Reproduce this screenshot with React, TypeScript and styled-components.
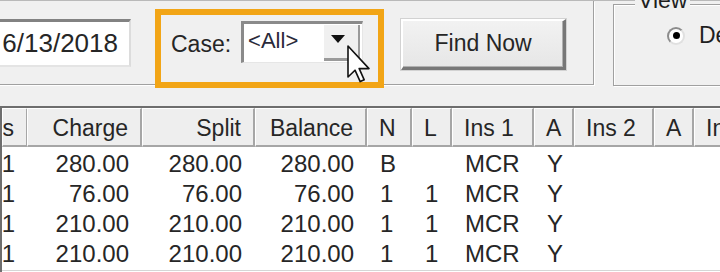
import React from 'react';
import styled, { createGlobalStyle } from 'styled-components';

const Global = createGlobalStyle`
    html, body {
        margin: 0;
        padding: 0;
        background: #f0f0f0;
    }
    body {
        font-family: 'Liberation Sans', Arial, sans-serif;
        color: #1f1f1f;
    }
`;

const Screen = styled.div`
    width: 720px;
    height: 272px;
    overflow: hidden;
    background: #f0f0f0;
    display: flex;
    flex-direction: column;
`;

const TopBar = styled.div`
    position: relative;
    height: 105px;
    display: flex;
    align-items: flex-start;
    border-top: 1px solid #b9b9b9;
    flex-shrink: 0;
`;

const SearchPanel = styled.div`
    width: 603px;
    margin-left: -10px;
    height: 83px;
    display: flex;
    align-items: center;
    border-right: 1px solid #a0a0a0;
    border-bottom: 1px solid #a0a0a0;
    box-shadow: 1px 1px 0 #ffffff;
    flex-shrink: 0;
`;

const DateBox = styled.div`
    width: 128px;
    height: 43px;
    margin-top: 1px;
    background: #ffffff;
    border-top: 3px solid #828282;
    border-right: 2px solid #dcdcdc;
    border-bottom: 2px solid #e4e4e4;
    display: flex;
    align-items: center;
    justify-content: flex-end;
    padding-right: 11px;
    font-size: 26px;
    color: #262626;
`;

const Label = styled.span`
    margin-left: 40px;
    margin-top: 4px;
    font-size: 23px;
    color: #262626;
`;

const Combo = styled.div`
    margin-left: 10px;
    margin-top: -2px;
    width: 122px;
    height: 42px;
    box-sizing: border-box;
    background: #ffffff;
    border-top: 3px solid #8a8a8a;
    border-left: 3px solid #8a8a8a;
    border-right: 1px solid #e6e6e6;
    border-bottom: 1px solid #e6e6e6;
    display: flex;
    align-items: center;
    justify-content: space-between;
`;

const ComboText = styled.span`
    font-size: 22px;
    padding-left: 4px;
    margin-top: -4px;
    color: #2a2a3a;
`;

const DropButton = styled.div`
    width: 36px;
    height: 36px;
    margin-right: 2px;
    background: #f0f0f0;
    border-right: 2px solid #9a9a9a;
    border-bottom: 3px solid #9a9a9a;
    box-sizing: border-box;
    display: flex;
    align-items: center;
    justify-content: center;
    padding-right: 6px;
`;

const Triangle = styled.div`
    width: 0;
    height: 0;
    border-left: 7px solid transparent;
    border-right: 7px solid transparent;
    border-top: 8px solid #111111;
    margin-top: -4px;
`;

const FindButton = styled.button`
    margin-left: 38px;
    margin-top: 3px;
    width: 165px;
    height: 51px;
    font-family: 'Liberation Sans', Arial, sans-serif;
    font-size: 23px;
    color: #262626;
    background: linear-gradient(#f2f2f2, #e6e6e6);
    border-top: 2px solid #ffffff;
    border-left: 2px solid #ffffff;
    border-right: 3px solid #777777;
    border-bottom: 3px solid #777777;
    box-shadow: inset -1px -1px 0 #b0b0b0, 0 0 0 1px #d2d2d2;
    padding: 0;
`;

const ViewGroup = styled.div`
    margin-left: 19px;
    margin-top: 3px;
    height: 80px;
    flex: 1;
    border-left: 1px solid #a0a0a0;
    border-top: 1px solid #a0a0a0;
    border-bottom: 1px solid #a0a0a0;
    box-shadow: inset 1px 1px 0 #ffffff, 1px 1px 0 #ffffff;
    display: flex;
    flex-direction: column;
`;

const Legend = styled.span`
    align-self: flex-start;
    margin: -16px 0 0 21px;
    padding: 0 3px;
    line-height: 23px;
    font-size: 23px;
    background: #f0f0f0;
`;

const RadioRow = styled.div`
    display: flex;
    align-items: center;
    margin: 10px 0 0 53px;
    gap: 14px;
    font-size: 23px;
`;

const Radio = styled.div`
    width: 14px;
    height: 14px;
    border-radius: 50%;
    background: #ffffff;
    border: 2px solid #8c8c8c;
    border-right-color: #e0e0e0;
    border-bottom-color: #e0e0e0;
    display: flex;
    align-items: center;
    justify-content: center;

    &::after {
        content: '';
        width: 7px;
        height: 7px;
        border-radius: 50%;
        background: #000000;
    }
`;

const Highlight = styled.div`
    position: absolute;
    left: 155px;
    top: 8px;
    width: 217px;
    height: 67px;
    border: 6px solid #f2a516;
`;

const Cursor = styled.svg`
    position: absolute;
    left: 345px;
    top: 44px;
    width: 28px;
    height: 38px;
`;

const Grid = styled.div`
    flex: 1;
    border-top: 2px solid #6e6e6e;
    border-left: 2px solid #6e6e6e;
    background: #ffffff;
    overflow: hidden;
    display: flex;
    flex-direction: column;
`;

const COLS = '25px 115px 113px 112px 45px 40px 82px 40px 80px 40px 80px';

const HeaderRow = styled.div`
    display: grid;
    grid-template-columns: ${COLS};
    height: 39px;
    background: #f0f0f0;
`;

const HeadCell = styled.div<{ $right?: boolean }>`
    display: flex;
    align-items: center;
    justify-content: ${p => (p.$right ? 'flex-end' : 'flex-start')};
    padding: 2px 12px 0 11px;
    font-size: 23px;
    color: #262626;
    white-space: nowrap;
    overflow: hidden;
    border-top: 1px solid #ffffff;
    border-left: 1px solid #ffffff;
    border-right: 2px solid #a6a6a6;
    border-bottom: 2px solid #a6a6a6;
    background: #eeeeee;
`;

const Body = styled.div`
    height: 123px;
    border-bottom: 1px solid #d6d6d6;
`;

const Row = styled.div`
    display: grid;
    grid-template-columns: ${COLS};
    height: 30px;
`;

const Cell = styled.div<{ $right?: boolean }>`
    display: flex;
    align-items: center;
    justify-content: ${p => (p.$right ? 'flex-end' : 'flex-start')};
    padding: 3px 13px 0 13px;
    font-size: 24px;
    white-space: nowrap;
    overflow: hidden;
    color: #262626;
`;

const columns = [
    { title: 's', right: true },
    { title: 'Charge', right: true },
    { title: 'Split', right: true },
    { title: 'Balance', right: true },
    { title: 'N' },
    { title: 'L' },
    { title: 'Ins 1' },
    { title: 'A' },
    { title: 'Ins 2' },
    { title: 'A' },
    { title: 'Ins 3' },
];

const rows = [
    ['1', '280.00', '280.00', '280.00', 'B', '', 'MCR', 'Y', '', '', ''],
    ['1', '76.00', '76.00', '76.00', '1', '1', 'MCR', 'Y', '', '', ''],
    ['1', '210.00', '210.00', '210.00', '1', '1', 'MCR', 'Y', '', '', ''],
    ['1', '210.00', '210.00', '210.00', '1', '1', 'MCR', 'Y', '', '', ''],
];

export default function App() {
    return (
        <Screen>
            <Global />
            <TopBar>
                <SearchPanel>
                    <DateBox>6/13/2018</DateBox>
                    <Label>Case:</Label>
                    <Combo>
                        <ComboText>&lt;All&gt;</ComboText>
                        <DropButton>
                            <Triangle />
                        </DropButton>
                    </Combo>
                    <FindButton>Find Now</FindButton>
                </SearchPanel>
                <ViewGroup>
                    <Legend>View</Legend>
                    <RadioRow>
                        <Radio />
                        <span>Detail</span>
                    </RadioRow>
                </ViewGroup>
                <Highlight />
                <Cursor viewBox="0 0 12 19">
                    <path
                        d="M0.5 0.5 L0.5 16 L4 12.6 L6.6 18.3 L8.6 17.4 L6.1 11.8 L11 11.8 Z"
                        fill="#ffffff"
                        stroke="#111111"
                        strokeWidth="0.8"
                        strokeLinejoin="round"
                    />
                </Cursor>
            </TopBar>
            <Grid>
                <HeaderRow>
                    {columns.map((c, i) => (
                        <HeadCell key={i} $right={c.right}>
                            {c.title}
                        </HeadCell>
                    ))}
                </HeaderRow>
                <Body>
                    {rows.map((r, ri) => (
                        <Row key={ri}>
                            {r.map((v, ci) => (
                                <Cell key={ci} $right={columns[ci].right}>
                                    {v}
                                </Cell>
                            ))}
                        </Row>
                    ))}
                </Body>
            </Grid>
        </Screen>
    );
}
